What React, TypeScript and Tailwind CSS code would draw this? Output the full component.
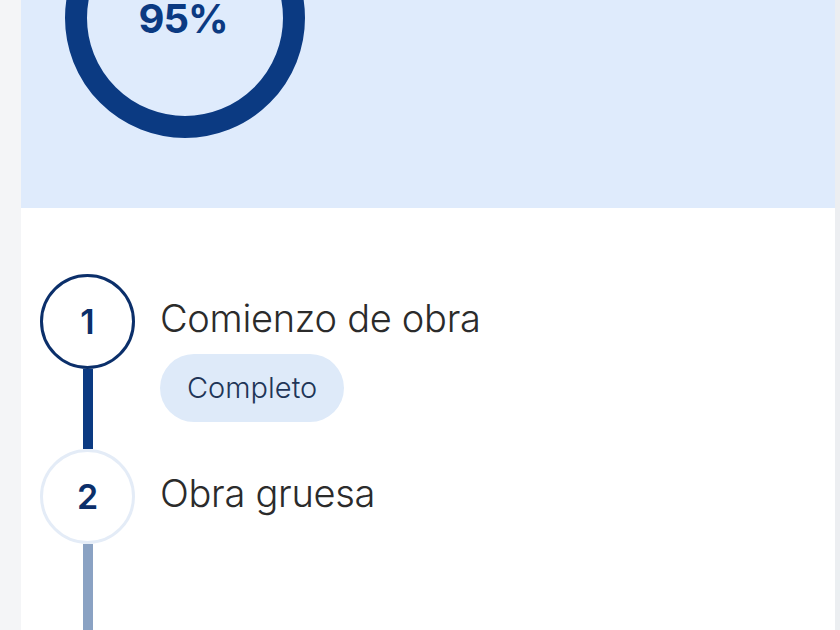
import React from "react";

export default function App() {
  const font = { fontFamily: "Inter, 'Noto Sans', sans-serif" };
  return (
    <div className="w-[840px] h-[630px] overflow-hidden bg-[#f4f5f7] flex" style={font}>
      <div className="w-[21px] shrink-0" />
      <div className="w-[814px] shrink-0 bg-white flex flex-col">
        <div className="h-[208px] bg-[#dfebfc] relative shrink-0">
          <svg className="absolute left-[23px] top-[-123px]" width="282" height="282" viewBox="0 0 282 282">
            <circle cx="141" cy="141" r="109" fill="none" stroke="#0b3a82" strokeWidth="22" />
          </svg>
          <div className="absolute left-[82px] top-[-5px] w-[160px] text-center text-[40px] font-bold text-[#0b3a82] leading-[48px] tracking-tight">95%</div>
        </div>
        <div className="pl-[19px] pt-[66px] flex flex-col">
          <div className="flex">
            <div className="flex flex-col items-center w-[95px] shrink-0">
              <div className="w-[95px] h-[95px] rounded-full border-[3px] border-[#0b2f6a] flex items-center justify-center text-[34px] font-semibold text-[#0b2f6a]">1</div>
              <div className="w-[10px] h-[80px] bg-[#0b3a82]" />
            </div>
            <div className="pl-[25px] pt-[20px] flex flex-col items-start">
              <div className="text-[38px] font-light text-[#2b2b2b] leading-[48px] tracking-[-0.3px]">Comienzo de obra</div>
              <div className="mt-[12px] h-[68px] px-[27px] rounded-full bg-[#deeaf9] flex items-center text-[29px] text-[#1e3557] font-light">Completo</div>
            </div>
          </div>
          <div className="flex">
            <div className="flex flex-col items-center w-[95px] shrink-0">
              <div className="w-[95px] h-[95px] rounded-full border-[3px] border-[#e4ecf7] flex items-center justify-center text-[34px] font-semibold text-[#0b2f6a]">2</div>
              <div className="w-[10px] h-[100px] bg-[#8aa2c3]" />
            </div>
            <div className="pl-[25px] pt-[20px]">
              <div className="text-[38px] font-light text-[#2b2b2b] leading-[48px] tracking-[-0.3px]">Obra gruesa</div>
            </div>
          </div>
        </div>
      </div>
      <div className="w-[5px] shrink-0 bg-[#eceef1]" />
    </div>
  );
}
